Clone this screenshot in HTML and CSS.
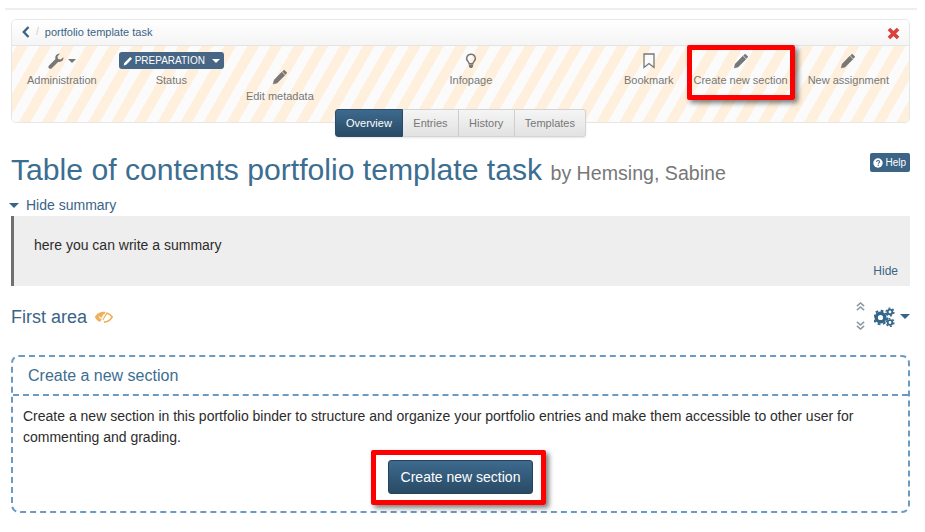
FILE: index.html
```html
<!DOCTYPE html>
<html lang="en">
<head>
    <meta charset="UTF-8">
    <title>Table of contents portfolio template task</title>
    <link rel="stylesheet" href="styles.css">
</head>
<body>
    <div class="topline"></div>

    <div class="toolbar">
        <div class="crumbs">
            <svg class="back" viewBox="0 0 8 12"><path d="M6.500 1 1.800 6l4.700 5" fill="none" stroke="#3b6486" stroke-width="2.400"/></svg>
            <span class="slash">/</span>
            <a href="#">portfolio template task</a>
            <svg class="close" viewBox="0 0 12 12"><path d="M1.800 1.800l8.400 8.400M10.200 1.800l-8.400 8.400" stroke="#d9413b" stroke-width="3.400"/></svg>
        </div>
        <div class="tools">
            <div class="tool-group left">
                <div class="tool">
                    <div class="tool-icon">
                        <svg class="icon" viewBox="0 0 16 16"><path d="M15.400 4.200c.2 1.700-.3 3-1.500 3.900-1 .8-2.300 1-3.600.6L3.800 15.200c-.8.800-2 .8-2.800 0s-.8-2 0-2.800l6.500-6.500c-.4-1.300-.2-2.600.6-3.600C9.100 1.100 10.400.6 12 .8L9.500 3.300l.5 2.700 2.700.5z" fill="#777"/></svg>
                        <span class="caret grey"></span>
                    </div>
                    <span>Administration</span>
                </div>
                <div class="tool">
                    <div class="status">
                        <svg class="mini" viewBox="0 0 16 16"><path d="M11.500 1.500l3 3L5 14l-4 1 1-4z" fill="#fff"/></svg>
                        PREPARATION
                        <span class="caret white"></span>
                    </div>
                    <span>Status</span>
                </div>
                <div class="tool low">
                    <div class="tool-icon">
                        <svg class="icon" viewBox="0 0 16 16"><path d="M12.200 1l2.800 2.800-1.600 1.600-2.800-2.800zM9.800 3.100l3.100 3.100-7.800 7.800-3.900 1 1-3.900z" fill="#777" stroke="#777" stroke-width=".5"/></svg>
                    </div>
                    <span>Edit metadata</span>
                </div>
            </div>
            <div class="tool info">
                <div class="tool-icon">
                    <svg class="icon" viewBox="0 0 16 16"><path d="M8 1.200a4.300 4.300 0 0 0-2.800 7.600c.6.600.9 1.200.9 2h3.800c0-.8.300-1.400.9-2A4.300 4.300 0 0 0 8 1.200z" fill="none" stroke="#777" stroke-width="1.400"/><path d="M6 11.500h4v2l-1 1.500H7l-1-1.500z" fill="#777"/></svg>
                </div>
                <span>Infopage</span>
            </div>
            <div class="tool-group">
                <div class="tool">
                    <div class="tool-icon">
                        <svg class="icon" viewBox="0 0 16 16"><path d="M3 1h10v13.500l-5-4-5 4z" fill="none" stroke="#777" stroke-width="1.300"/></svg>
                    </div>
                    <span>Bookmark</span>
                </div>
                <div class="tool">
                    <div class="tool-icon">
                        <svg class="icon" viewBox="0 0 16 16"><path d="M12.200 1l2.800 2.800-1.600 1.600-2.800-2.800zM9.800 3.100l3.100 3.100-7.800 7.800-3.900 1 1-3.900z" fill="#777" stroke="#777" stroke-width=".5"/></svg>
                    </div>
                    <span>Create new section</span>
                </div>
                <div class="tool">
                    <div class="tool-icon">
                        <svg class="icon" viewBox="0 0 16 16"><path d="M12.200 1l2.800 2.800-1.600 1.600-2.800-2.800zM9.800 3.100l3.100 3.100-7.800 7.800-3.900 1 1-3.900z" fill="#777" stroke="#777" stroke-width=".5"/></svg>
                    </div>
                    <span>New assignment</span>
                </div>
            </div>
        </div>
    </div>

    <div class="tabs">
        <a class="tab active" href="#">Overview</a>
        <a class="tab" href="#">Entries</a>
        <a class="tab" href="#">History</a>
        <a class="tab" href="#">Templates</a>
    </div>

    <div class="title-row">
        <h1>Table of contents portfolio template task <small>by Hemsing, Sabine</small></h1>
        <a class="help" href="#">
            <svg class="mini" viewBox="0 0 16 16"><circle cx="8" cy="8" r="7.500" fill="#fff"/><path d="M5.600 6.200C5.800 4.800 6.800 4 8.100 4c1.400 0 2.400.8 2.400 2 0 1.700-2 1.700-2 3.300" fill="none" stroke="#3b6486" stroke-width="1.700"/><rect x="7.400" y="10.600" width="2" height="1.900" fill="#3b6486"/></svg>
            Help
        </a>
    </div>

    <a class="toggle" href="#"><span class="caret blue"></span>Hide summary</a>
    <div class="summary">
        <p>here you can write a summary</p>
        <a href="#">Hide</a>
    </div>

    <div class="area-row">
        <h2>First area</h2>
        <svg class="eye" viewBox="0 0 19 14"><path d="M.8 7C2.800 3.800 5.500 2 9 1.800c1 0 1.900.1 2.700.3L6.300 12C3.800 11.300 2.100 9.500.8 7z" fill="#efb05c"/><path d="M8.500 9.800 12.800 3c2.300.8 4.100 2.200 5.400 4-1.900 3-4.800 5-8.200 5.100" fill="none" stroke="#efb05c" stroke-width="1.600"/><path d="M5.800 13.500 13.200.5" stroke="#fff" stroke-width=".8"/><path d="M5 6.500c1 1.500 2 2 2.800 2L10 4.500" fill="none" stroke="#fff" stroke-width="1.100"/></svg>
        <div class="area-tools">
            <div class="movers">
                <svg class="chev" viewBox="0 0 10 10"><path d="M1 4.500l4-3.500 4 3.500M1 9l4-3.500L9 9" fill="none" stroke="#8d9aa5" stroke-width="1.700"/></svg>
                <svg class="chev" viewBox="0 0 10 10"><path d="M1 1l4 3.500L9 1M1 5.500 5 9l4-3.500" fill="none" stroke="#8d9aa5" stroke-width="1.700"/></svg>
            </div>
            <svg class="gears" viewBox="0 0 21 20">
                <circle cx="6.500" cy="10.500" r="4.300" fill="none" stroke="#34658a" stroke-width="3.400"/>
                <circle cx="6.500" cy="10.500" r="6.800" fill="none" stroke="#34658a" stroke-width="2" stroke-dasharray="2.800 2.540"/>
                <circle cx="16" cy="5" r="2.300" fill="none" stroke="#34658a" stroke-width="1.800"/>
                <circle cx="16" cy="5" r="3.900" fill="none" stroke="#34658a" stroke-width="1.400" stroke-dasharray="2 2.080"/>
                <circle cx="16" cy="15.500" r="2.300" fill="none" stroke="#34658a" stroke-width="1.800"/>
                <circle cx="16" cy="15.500" r="3.900" fill="none" stroke="#34658a" stroke-width="1.400" stroke-dasharray="2 2.080"/>
            </svg>
            <span class="caret blue"></span>
        </div>
    </div>

    <div class="new-section">
        <h3>Create a new section</h3>
        <div class="new-body">
            <p>Create a new section in this portfolio binder to structure and organize your portfolio entries and make them accessible to other user for commenting and grading.</p>
            <div class="center">
                <a class="primary" href="#">Create new section</a>
            </div>
        </div>
    </div>

    <!-- red marks from the screenshot -->
    <div class="mark mark-top"></div>
    <div class="mark mark-button"></div>
</body>
</html>
```

FILE: styles.css
```css
html, body {
    height: 532px;
    overflow: hidden;
}

body {
    position: relative;
    margin: 0;
    padding: 8px 15px 0 11px;
    box-sizing: border-box;
    font-family: "Liberation Sans", Arial, sans-serif;
    font-size: 14px;
    color: #2c2c2c;
    background-color: #fff;
}

a {
    color: #3b6486;
    text-decoration: none;
}

.topline {
    height: 2px;
    margin: 0 -7px 9px -6px;
    background-color: #eeeeee;
}

.toolbar {
    height: 104px;
    box-sizing: border-box;
    border: 1px solid #e6e6e6;
    border-radius: 5px;
    overflow: hidden;
}

.crumbs {
    display: flex;
    align-items: center;
    height: 26px;
    box-sizing: border-box;
    padding: 0 9px 2px 10px;
    font-size: 10px;
    border-bottom: 1px solid #e4e4e4;
    background: linear-gradient(to bottom, #ffffff, #f5f5f5);
}

.crumbs a {
    flex: 1;
    font-size: 11px;
}

.back {
    width: 8px;
    height: 12px;
}

.slash {
    margin: 0 6px;
    color: #cccccc;
}

.close {
    width: 13px;
    height: 13px;
    margin-top: 4px;
}

.tools {
    display: flex;
    justify-content: space-between;
    height: 76px;
    box-sizing: border-box;
    padding: 6px 20px 0 15px;
    background: repeating-linear-gradient(120deg, #fbfbfb 0, #fbfbfb 4px, #fef0dc 4px, #fef0dc 14px, #fbfbfb 14px, #fbfbfb 20px);
}

.tool-group {
    display: flex;
    gap: 20px;
}

.tool-group.left {
    gap: 22px;
}

.tool {
    display: flex;
    flex-direction: column;
    align-items: center;
    gap: 5px;
    font-size: 11px;
    color: #777777;
}

.info {
    margin-left: 4px;
}

.low {
    padding-top: 16px;
}

.tool-icon {
    display: flex;
    align-items: center;
    gap: 4px;
    height: 17px;
}

.icon {
    width: 16px;
    height: 16px;
}

.mini {
    width: 10px;
    height: 10px;
}

.status {
    display: flex;
    align-items: center;
    gap: 2px;
    height: 17px;
    padding: 0 4px;
    font-size: 10px;
    color: #fff;
    border-radius: 3px;
    background-color: #476686;
}

.status .caret {
    margin-left: 5px;
}

.caret {
    display: inline-block;
    border-left: 4px solid transparent;
    border-right: 4px solid transparent;
    border-top: 4px solid #777;
}

.caret.white {
    border-top-color: #fff;
}

.caret.blue {
    border-left-width: 5px;
    border-right-width: 5px;
    border-top: 5px solid #34658a;
}

.tabs {
    display: flex;
    justify-content: center;
    height: 28px;
    margin-top: -14px;
    font-size: 11px;
}

.tab {
    display: flex;
    align-items: center;
    padding: 0 10.250px;
    color: #777;
    border: 1px solid #d4d4d4;
    border-left-width: 0;
    background: linear-gradient(to bottom, #f5f5f5, #e2e2e2);
    box-shadow: 0 1px 2px rgba(0, 0, 0, 0.1);
}

.tab:last-child {
    border-radius: 0 3px 3px 0;
}

.tab.active {
    color: #fff;
    border: 1px solid #2b4d68;
    border-radius: 3px 0 0 3px;
    background: linear-gradient(to bottom, #3d6a8e, #294a65);
}

.title-row {
    display: flex;
    justify-content: space-between;
    align-items: flex-start;
    height: 41px;
    margin-top: 16px;
}

h1 {
    margin: 0;
    font-size: 30.150px;
    line-height: 34px;
    font-weight: normal;
    color: #3b6e91;
}

h1 small {
    font-size: 19.600px;
    color: #777777;
}

.help {
    display: flex;
    align-items: center;
    gap: 2px;
    height: 19px;
    padding: 0 4px 0 3px;
    font-size: 10px;
    color: #fff;
    border-radius: 2px;
    background-color: #3b6486;
}

.toggle {
    display: flex;
    align-items: center;
    gap: 7px;
    height: 22px;
    margin-left: -2px;
}

.summary {
    display: flex;
    flex-direction: column;
    justify-content: space-between;
    height: 70px;
    box-sizing: border-box;
    padding: 20px 12px 8px 20px;
    border-left: 3px solid #707070;
    background-color: #eeeeee;
    font-size: 14px;
    line-height: 18px;
}

.summary p {
    margin: 0;
}

.summary a {
    align-self: flex-end;
    font-size: 12px;
    line-height: 14px;
}

.area-row {
    display: flex;
    align-items: center;
    gap: 7px;
    height: 60px;
    box-sizing: border-box;
    padding-top: 2px;
}

h2 {
    margin: 0;
    font-size: 18px;
    font-weight: normal;
    color: #3b6486;
}

.eye {
    width: 19px;
    height: 14px;
}

.area-tools {
    display: flex;
    align-items: center;
    margin-left: auto;
}

.area-tools .caret {
    margin-left: 5px;
    margin-top: -2px;
}

.movers {
    display: flex;
    flex-direction: column;
    gap: 10px;
    margin: -2px 9px 0 1px;
}

.chev {
    display: block;
    width: 9px;
    height: 9px;
}

.gears {
    width: 21px;
    height: 20px;
}

.new-section {
    height: 158px;
    box-sizing: border-box;
    margin-top: 9px;
    border: 2px dashed #6b9bc3;
    border-radius: 8px;
}

h3 {
    height: 39px;
    box-sizing: border-box;
    margin: 0;
    padding: 9px 15px 0;
    font-size: 16px;
    line-height: 20px;
    font-weight: normal;
    color: #3b6e91;
    border-bottom: 2px dashed #6b9bc3;
}

.new-body {
    padding: 10px 10px 0;
}

.new-body p {
    margin: 0;
    line-height: 21px;
}

.center {
    display: flex;
    justify-content: center;
    margin-top: 12px;
}

.primary {
    display: block;
    padding: 0 12px;
    line-height: 32px;
    color: #fff;
    border: 1px solid #24435c;
    border-radius: 3px;
    background: linear-gradient(to bottom, #3d6a8e, #294a65);
}

.mark {
    position: absolute;
    box-sizing: border-box;
    border: 5px solid #f00;
    border-radius: 2px;
    box-shadow: 3px 3px 5px rgba(0, 0, 0, 0.5);
}

.mark-top {
    left: 687px;
    top: 45px;
    width: 108px;
    height: 55px;
}

.mark-button {
    left: 371px;
    top: 450px;
    width: 175px;
    height: 55px;
}
```
